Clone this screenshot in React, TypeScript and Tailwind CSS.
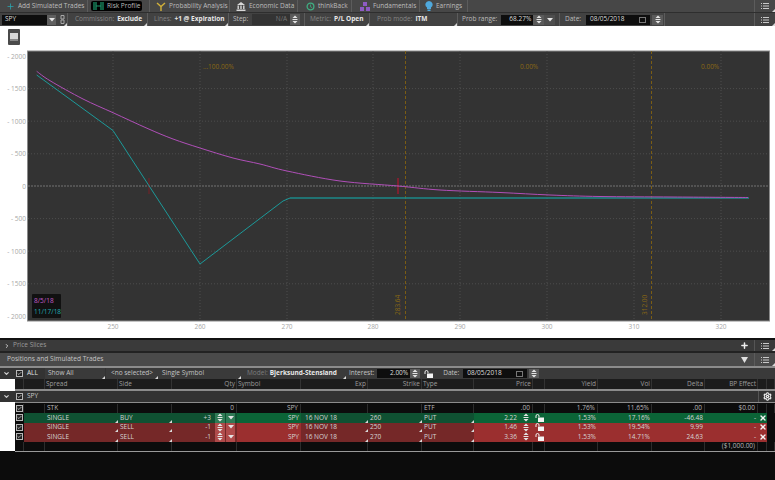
import { Check, ChevronDown, ChevronRight, Plus, Settings, X } from "lucide-react";
import type { ReactNode } from "react";

const Corner = () => (
  <span className="absolute bottom-0 right-0 w-0 h-0 border-l-[3px] border-b-[3px] border-l-transparent border-b-[#d8d8d8]" />
);

const ListIcon = () => (
  <svg width="8" height="8" viewBox="0 0 8 8">
    <path d="M0 1h1v1H0zM0 3.5h1v1H0zM0 6h1v1H0zM2 1h6v1H2zM2 3.5h6v1H2zM2 6h6v1H2z" fill="#c8c8c8" />
  </svg>
);

const Spinner = ({ className = "w-[10px] bg-[#5a5a5a]" }: { className?: string }) => (
  <span className={`flex flex-col h-full items-center justify-center shrink-0 ${className}`}>
    <svg width="6" height="9" viewBox="0 0 6 9">
      <path d="M3 0.5 5.5 3H.5zM0.5 4h5v1h-5zM.5 6h5L3 8.5z" fill="#e4e4e4" />
    </svg>
  </span>
);

const Arrow = ({ className = "w-[10px] bg-[#5a5a5a]" }: { className?: string }) => (
  <span className={`flex h-full items-center justify-center shrink-0 ${className}`}>
    <svg width="6" height="4" viewBox="0 0 6 4">
      <path d="M0 0h6L3 3.5z" fill="#e4e4e4" />
    </svg>
  </span>
);

const Lock = ({ className = "" }: { className?: string }) => (
  <svg width="9" height="8" viewBox="0 0 9 8" className={className}>
    <path d="M1 4V2a1.5 1.5 0 0 1 3 0v1" stroke="#f0f0f0" strokeWidth="1" fill="none" />
    <rect x="3" y="3.5" width="6" height="4.5" fill="#f4f4f4" />
  </svg>
);

const Tab = ({ w, icon, label, active }: { w: string; icon: ReactNode; label: string; active?: boolean }) => (
  <div className={`flex items-center h-full shrink-0 border-r border-[#5c5c5c] ${w}`}>
    <div className={`flex items-center gap-[3px] h-[10px] rounded-[2px] ${active ? "bg-black px-[2px] ml-[3px]" : "ml-[6px]"}`}>
      {icon}
      <span className="text-[#bdbdbd] whitespace-nowrap">{label}</span>
    </div>
  </div>
);

const Seg = ({ w, children, corner }: { w: string; children: ReactNode; corner?: boolean }) => (
  <div className={`relative flex items-center h-full shrink-0 border-r border-[#5c5c5c] ${w}`}>
    {children}
    {corner && <Corner />}
  </div>
);

const Field = ({ dim, value, pad = "pl-[7px]" }: { dim: string; value: string; pad?: string }) => (
  <div className={`flex items-center gap-[3px] whitespace-nowrap ${pad}`}>
    <span className="text-[#858585]">{dim}</span>
    <span className="text-[#e8e8e8] font-bold">{value}</span>
  </div>
);

const Checkbox = () => (
  <span className="flex items-center justify-center w-[7px] h-[7px] bg-[#222] border border-[#b8b8b8]">
    <Check size={7} strokeWidth={3} color="#f0f0f0" />
  </span>
);

const cols = "grid grid-cols-[9px_21px_73px_54px_65px_64px_67px_54px_52px_59px_12px_53px_54px_53px_53px_9px_8px]";

const xTicks = [
  [113, "250"],
  [200, "260"],
  [287, "270"],
  [373, "280"],
  [460, "290"],
  [547, "300"],
  [634, "310"],
  [721, "320"],
] as const;

// y is relative to the chart svg, 32.6px per 500
const yTicks = [
  [6, "- 2000"],
  [38.6, "- 1500"],
  [71.2, "- 1000"],
  [103.8, "- 500"],
  [136, "0"],
  [168.6, "- 500"],
  [201.2, "- 1000"],
  [233.8, "- 1500"],
  [266.5, "- 2000"],
] as const;

const purple: [number, number][] = [
  [36.7, 21.3], [50, 30.7], [83, 49], [113, 62.7], [148, 78.7], [173, 89], [200, 98], [233, 108],
  [260, 114], [287, 121], [340, 131], [398, 136], [440, 140], [500, 142.5], [550, 145], [600, 146.5],
  [673, 147], [748, 147.5],
];

// catmull-rom through the sampled points
const smooth = (p: [number, number][]) => {
  let d = `M${p[0][0]} ${p[0][1]}`;
  for (let i = 0; i < p.length - 1; i++) {
    const a = p[Math.max(i - 1, 0)];
    const b = p[i];
    const c = p[i + 1];
    const e = p[Math.min(i + 2, p.length - 1)];
    d += `C${b[0] + (c[0] - a[0]) / 6} ${b[1] + (c[1] - a[1]) / 6} ${c[0] - (e[0] - b[0]) / 6} ${c[1] - (e[1] - b[1]) / 6} ${c[0]} ${c[1]}`;
  }
  return d;
};

const Chart = () => (
  <svg width="775" height="295" viewBox="0 0 775 295" className="block" style={{ fontFamily: "Open Sans, sans-serif" }}>
    <rect x="27.5" y="1" width="742" height="270" fill="#333333" stroke="#8a8a8a" strokeWidth="1" />
    {yTicks.map(([y, t], i) => (
      <g key={i}>
        {i > 0 && i < 8 && i !== 4 && (
          <line x1="28" x2="769" y1={y} y2={y} stroke="#4e4e4e" strokeDasharray="1 2" />
        )}
        <text x="26" y={y + 2.5} textAnchor="end" fontSize="6.5" fill="#a8a8a8">
          {t}
        </text>
      </g>
    ))}
    <line x1="28" x2="769" y1="136" y2="136" stroke="#757575" strokeDasharray="2 1" />
    {xTicks.map(([x, t]) => (
      <g key={x}>
        <line x1={x} x2={x} y1="1" y2="271" stroke="#4e4e4e" strokeDasharray="1 2" />
        <text x={x} y="279" textAnchor="middle" fontSize="6.5" fill="#a8a8a8">
          {t}
        </text>
      </g>
    ))}
    <text x="203" y="18.5" fontSize="6.5" fill="#8a6814">...100.00%</text>
    <text x="520" y="18.5" fontSize="6.5" fill="#8a6814">0.00%</text>
    <text x="701" y="18.5" fontSize="6.5" fill="#8a6814">0.00%</text>
    <line x1="405.5" x2="405.5" y1="1" y2="271" stroke="#7a5c14" strokeDasharray="3 2" />
    <line x1="651.5" x2="651.5" y1="1" y2="271" stroke="#7a5c14" strokeDasharray="3 2" />
    <text transform="translate(400 265) rotate(-90)" fontSize="6.5" fill="#8a6814">283.64</text>
    <text transform="translate(647 265) rotate(-90)" fontSize="6.5" fill="#8a6814">312.00</text>
    <line x1="149" x2="149" y1="128" y2="144" stroke="#7a2026" strokeWidth="1" />
    <line x1="398" x2="398" y1="128" y2="144" stroke="#c8102e" strokeWidth="1" />
    <polyline points="36.7,25 113,80.5 200,214 283,151 290,148" fill="none" stroke="#1c9a9a" strokeWidth="1" />
    <line x1="290" x2="749" y1="148" y2="148" stroke="#1c8a8a" strokeWidth="1.6" />
    <path d={smooth(purple)} fill="none" stroke="#b04fb8" strokeWidth="1" />
    <rect x="32" y="244" width="29" height="24" rx="1" fill="#111111" />
    <text x="34" y="253" fontSize="6.5" fill="#c05cc8">8/5/18</text>
    <text x="34" y="264" fontSize="6.5" fill="#22b0b0">11/17/18</text>
  </svg>
);

type Leg = {
  side: string;
  qty: string;
  exp: string;
  strike: string;
  price: string;
  vol: string;
  delta: string;
  green: boolean;
};

const legs: Leg[] = [
  { side: "BUY", qty: "+3", exp: "16 NOV 18", strike: "260", price: "2.22", vol: "17.16%", delta: "-46.48", green: true },
  { side: "SELL", qty: "-1", exp: "16 NOV 18", strike: "250", price: "1.46", vol: "19.54%", delta: "9.99", green: false },
  { side: "SELL", qty: "-1", exp: "16 NOV 18", strike: "270", price: "3.36", vol: "14.71%", delta: "24.63", green: false },
];

const LegRow = ({ leg }: { leg: Leg }) => {
  const edit = leg.green ? "bg-[#0f5132]" : "bg-[#752828]";
  const flat = leg.green ? "bg-[#0b6437]" : "bg-[#9b2f2f]";
  const btn = leg.green ? "bg-[#2f7a55]" : "bg-[#b04a4a]";
  const cell = "relative flex items-center h-full px-[2px] overflow-hidden";
  return (
    <div className={`${cols} h-[9.5px] text-[#d4d4d4] ${flat}`}>
      <div className="flex items-center justify-center bg-[#0c0c0c]">
        <Checkbox />
      </div>
      <div className={`${cell} ${edit}`} />
      <div className={`${cell} ${edit}`}>
        SINGLE
        <Corner />
      </div>
      <div className={`${cell} ${edit}`}>
        {leg.side}
        <Corner />
      </div>
      <div className={`${cell} ${edit} justify-end !pr-0`}>
        <span className="mr-[4px]">{leg.qty}</span>
        <Spinner className={`w-[10px] ${btn}`} />
        <span className="w-px" />
        <Arrow className={`w-[9px] ${btn}`} />
        <span className="w-[2px]" />
      </div>
      <div className={`${cell} justify-end`}>SPY</div>
      <div className={`${cell} ${edit}`}>
        <span className="pl-[2px]">{leg.exp}</span>
        <Corner />
      </div>
      <div className={`${cell} ${edit}`}>
        {leg.strike}
        <Corner />
      </div>
      <div className={`${cell} ${edit}`}>
        PUT
        <Corner />
      </div>
      <div className={`${cell} justify-end !pr-0`}>
        <span className="mr-[5px]">{leg.price}</span>
        <Spinner className="w-[8px]" />
        <span className="w-[3px]" />
      </div>
      <div className="flex items-center justify-center">
        <Lock />
      </div>
      <div className={`${cell} justify-end`}>1.53%</div>
      <div className={`${cell} justify-end`}>{leg.vol}</div>
      <div className={`${cell} justify-end`}>{leg.delta}</div>
      <div className={`${cell} justify-end`}>-</div>
      <div className="flex items-center justify-center">
        <X size={8} color="#f4f4f4" strokeWidth={4} />
      </div>
      <div className="bg-[#0c0c0c]" />
    </div>
  );
};

export default function App() {
  return (
    <div
      className="w-[775px] h-[480px] overflow-hidden bg-[#0c0c0c] text-[6.5px] leading-none"
      style={{ fontFamily: "'Open Sans', sans-serif" }}
    >
      {/* top tabs */}
      <div className="flex items-center h-[13px] bg-[#474747] border-b border-[#2e2e2e]">
        <Tab w="w-[88px]" label="Add Simulated Trades" icon={<Plus size={9} color="#2aa6b0" />} />
        <Tab
          w="w-[62px]"
          active
          label="Risk Profile"
          icon={
            <svg width="11" height="8" viewBox="0 0 11 8">
              <path d="M1 0v8M3 0v8M8 0v8M10 0v8M3 4h5" stroke="#1c9a6c" strokeWidth="1.2" fill="none" />
            </svg>
          }
        />
        <Tab
          w="w-[80px]"
          label="Probability Analysis"
          icon={
            <svg width="10" height="9" viewBox="0 0 10 9">
              <path d="M1 1 5 4.5 9 1M5 4.5V9" stroke="#d2b13a" strokeWidth="1.4" fill="none" />
            </svg>
          }
        />
        <Tab
          w="w-[68px]"
          label="Economic Data"
          icon={
            <svg width="10" height="9" viewBox="0 0 10 9">
              <path d="M5 0 9 3H1zM1.5 3.5h1.4V7H1.5zM4.3 3.5h1.4V7H4.3zM7.1 3.5h1.4V7H7.1zM.5 7.5h9V9h-9z" fill="#d8d8d8" />
            </svg>
          }
        />
        <Tab
          w="w-[54px]"
          label="thinkBack"
          icon={
            <svg width="9" height="9" viewBox="0 0 9 9" className="ml-[2px]">
              <circle cx="4.5" cy="4.5" r="3.4" stroke="#3fae82" strokeWidth="1.3" fill="none" />
              <path d="M4.5 2.5v2.3l1.6.8" stroke="#3fae82" strokeWidth=".8" fill="none" />
            </svg>
          }
        />
        <Tab
          w="w-[68px]"
          label="Fundamentals"
          icon={
            <svg width="10" height="9" viewBox="0 0 10 9" className="ml-[2px]">
              <path d="M3 0h4v4H3zM0 5h4v4H0zM6 5h4v4H6z" fill="#8e5bc4" />
            </svg>
          }
        />
        <Tab
          w="w-[48px]"
          label="Earnings"
          icon={
            <svg width="8" height="10" viewBox="0 0 8 10" className="-ml-[1px]">
              <path d="M4 0a3.6 3.6 0 0 1 2 6.6V8H2V6.6A3.6 3.6 0 0 1 4 0zM2.5 8.6h3V10h-3z" fill="#4fa8dc" />
            </svg>
          }
        />
        <div className="flex-1 h-full border-r border-[#5c5c5c]" />
        <div className="relative flex items-center justify-center w-[20px] h-full">
          <ListIcon />
          <Corner />
        </div>
      </div>

      {/* settings strip */}
      <div className="flex items-center h-[13px] bg-[#424242]">
        <Seg w="w-[68px]" corner>
          <div className="flex items-center h-[10px] ml-[2px]">
            <div className="flex items-center w-[45px] h-full bg-[#0e0e0e] pl-[3px] text-[#dcdcdc]">SPY</div>
            <Arrow className="w-[9px] bg-[#5f5f5f]" />
          </div>
          <svg width="5" height="9" viewBox="0 0 5 9" className="ml-[4px]">
            <path d="M1 .5h3v3.5H1zM1 5h3v3.5H1z" stroke="#a8a8a8" fill="none" />
          </svg>
        </Seg>
        <Seg w="w-[80px]" corner>
          <Field dim="Commission:" value="Exclude" />
        </Seg>
        <Seg w="w-[81px]" corner>
          <Field dim="Lines:" value="+1 @ Expiration" pad="pl-[6px]" />
        </Seg>
        <Seg w="w-[76px]">
          <span className="ml-[4px] text-[#bdbdbd]">Step:</span>
          <div className="flex items-center h-[11px] ml-[4px]">
            <div className="flex items-center justify-end w-[38px] h-full bg-[#333] pr-[3px] text-[#777]">N/A</div>
            <Spinner className="w-[10px] bg-[#5a5a5a]" />
          </div>
        </Seg>
        <Seg w="w-[65px]" corner>
          <Field dim="Metric:" value="P/L Open" pad="pl-[5px]" />
        </Seg>
        <Seg w="w-[88px]" corner>
          <Field dim="Prob mode:" value="ITM" />
        </Seg>
        <Seg w="w-[102px]">
          <span className="ml-[4px] text-[#bdbdbd] whitespace-nowrap">Prob range:</span>
          <div className="flex items-center h-[10px] ml-[4px]">
            <div className="flex items-center justify-end w-[32px] h-full bg-[#0e0e0e] pr-[2px] text-[#dcdcdc]">68.27%</div>
            <Spinner className="w-[11px] bg-[#5a5a5a]" />
            <Arrow className="w-[11px] bg-[#4e4e4e]" />
          </div>
        </Seg>
        <Seg w="w-[105px]">
          <span className="ml-[5px] text-[#bdbdbd]">Date:</span>
          <div className="flex items-center h-[10px] ml-[5px]">
            <div className="flex items-center justify-between w-[64px] h-full bg-[#0e0e0e] px-[4px] text-[#dcdcdc]">
              08/05/2018
              <span className="w-[7px] h-[6px] border border-[#777]" />
            </div>
            <span className="w-[2px]" />
            <Spinner className="w-[11px] bg-[#5a5a5a]" />
          </div>
        </Seg>
        <div className="flex-1 h-full border-r border-[#5c5c5c]" />
        <div className="relative flex items-center justify-center w-[20px] h-full">
          <ListIcon />
          <Corner />
        </div>
      </div>

      {/* chart pane */}
      <div className="h-[312px] bg-white">
        <div className="h-[24px] pl-[8px] pt-[3px]">
          <div className="flex items-center justify-center w-[12px] h-[16px] rounded-[1px] bg-[#4a4a4a]">
            <div className="w-[8px] h-[8px] bg-[#d8d8d8] border-b-2 border-[#888]" />
          </div>
        </div>
        <Chart />
      </div>

      <div className="h-[2px] bg-[#111]" />

      {/* price slices */}
      <div className="flex items-center h-[11px] bg-[#3a3a3a] text-[#9a9a9a]">
        <ChevronRight size={6} color="#c8c8c8" strokeWidth={4} className="ml-[4px] mr-[3px]" />
        <span className="flex-1">Price Slices</span>
        <div className="flex items-center justify-center w-[20px] h-full border-r border-[#555]">
          <Plus size={9} color="#f0f0f0" strokeWidth={4} />
        </div>
        <div className="relative flex items-center justify-center w-[20px] h-full">
          <ListIcon />
          <Corner />
        </div>
      </div>
      <div className="h-[2px] bg-[#222]" />

      {/* positions header */}
      <div className="flex items-center h-[13px] bg-[#4a4a4a] text-[#c4c4c4] text-[6.6px]">
        <span className="flex-1 pl-[7px]">Positions and Simulated Trades</span>
        <div className="flex items-center justify-center w-[20px] h-full border-r border-[#5c5c5c]">
          <svg width="7" height="6" viewBox="0 0 7 6">
            <path d="M0 0h7L3.5 6z" fill="#e0e0e0" />
          </svg>
        </div>
        <div className="relative flex items-center justify-center w-[20px] h-full">
          <ListIcon />
          <Corner />
        </div>
      </div>
      <div className="h-[2px] bg-[#8c8c8c]" />

      {/* filters */}
      <div className="flex items-center h-[11px] bg-[#333] text-[#c4c4c4]">
        <div className="flex items-center w-[45px] shrink-0 h-full">
          <ChevronDown size={7} color="#d0d0d0" strokeWidth={4} className="ml-[3px]" />
          <span className="w-[6px]" />
          <Checkbox />
          <span className="ml-[4px] text-[#e0e0e0]">ALL</span>
        </div>
        <div className="relative flex items-center w-[60px] h-full pl-[3px] bg-[#3a3a3a]">
          Show All
          <Corner />
        </div>
        <div className="relative flex items-center w-[52px] h-full justify-center ml-[1px] bg-[#3a3a3a]">
          {"<no selected>"}
          <Corner />
        </div>
        <div className="relative flex items-center w-[83px] h-full pl-[4px] bg-[#3a3a3a]">
          Single Symbol
          <Corner />
        </div>
        <div className="relative flex items-center w-[105px] h-full pl-[6px] gap-[2px] whitespace-nowrap bg-[#3a3a3a]">
          <span className="text-[#7c7c7c]">Model:</span>
          <span className="text-[#e8e8e8] font-bold">Bjerksund-Stensland</span>
          <Corner />
        </div>
        <div className="flex items-center h-full pl-[3px] flex-1 bg-[#3a3a3a]">
          <span>Interest:</span>
          <div className="flex items-center justify-end w-[33px] h-[9px] ml-[3px] bg-[#0e0e0e] pr-[2px] text-[#dcdcdc]">2.00%</div>
          <Spinner className="w-[10px] bg-[#5a5a5a] !h-[9px]" />
          <Lock className="ml-[4px]" />
          <span className="ml-[10px]">Date:</span>
          <div className="flex items-center justify-between w-[64px] h-[9px] ml-[4px] bg-[#0e0e0e] px-[4px] text-[#dcdcdc]">
            08/05/2018
            <span className="w-[7px] h-[6px] border border-[#777]" />
          </div>
          <span className="w-[2px]" />
          <Spinner className="w-[10px] bg-[#5a5a5a] !h-[9px]" />
          <div className="flex-1" />
        </div>
      </div>

      {/* table */}
      <div className="flex">
        <div className="w-[15px] h-[72px] shrink-0 bg-white" />
        <div className="flex-1">
          <div className={`${cols} h-[10px] bg-[#1c1c1c] text-[#9c9c9c] [&>div]:border-r [&>div]:border-[#333] [&>div]:flex [&>div]:items-center [&>div]:px-[1px]`}>
            <div />
            <div />
            <div>Spread</div>
            <div>Side</div>
            <div className="justify-end">Qty</div>
            <div>Symbol</div>
            <div className="justify-end">Exp</div>
            <div className="justify-end">Strike</div>
            <div>Type</div>
            <div className="justify-end">Price</div>
            <div />
            <div className="justify-end">Yield</div>
            <div className="justify-end">Vol</div>
            <div className="justify-end">Delta</div>
            <div className="justify-end">BP Effect</div>
            <div />
            <div />
          </div>
          <div className="h-[2px] bg-[#8c8c8c]" />
          <div className="flex items-center h-[11px] -ml-[15px] bg-[#333] text-[#c8c8c8] relative">
            <ChevronDown size={7} color="#d0d0d0" strokeWidth={4} className="ml-[3px]" />
            <span className="w-[6px]" />
            <Checkbox />
            <span className="ml-[4px] flex-1">SPY</span>
            <div className="flex items-center justify-center w-[17px] h-full border-l border-[#555]">
              <Settings size={9} color="#f0f0f0" strokeWidth={3} />
            </div>
          </div>
          <div className="h-[1px] bg-[#8c8c8c]" />
          <div className="bg-[#0c0c0c]">
            <div className="h-[1px]" />
            <div className={`${cols} h-[9px] text-[#b8b8b8] [&>div]:border-r [&>div]:border-[#2c2c2c] [&>div]:flex [&>div]:items-center [&>div]:px-[2px]`}>
              <div className="justify-center !px-0">
                <Checkbox />
              </div>
              <div />
              <div>STK</div>
              <div />
              <div className="justify-end">0</div>
              <div className="justify-end">SPY</div>
              <div />
              <div />
              <div>ETF</div>
              <div className="justify-end">.00</div>
              <div />
              <div className="justify-end">1.76%</div>
              <div className="justify-end">11.65%</div>
              <div className="justify-end">.00</div>
              <div className="justify-end">$0.00</div>
              <div />
              <div />
            </div>
            {legs.map((leg) => (
              <LegRow key={leg.strike} leg={leg} />
            ))}
            <div className={`${cols} h-[9px] text-[#b8b8b8] [&>div]:border-r [&>div]:border-[#2c2c2c] [&>div]:flex [&>div]:items-center`}>
              <div />
              <div />
              <div />
              <div />
              <div />
              <div />
              <div />
              <div />
              <div />
              <div />
              <div />
              <div />
              <div />
              <div />
              <div className="justify-end pr-[2px]">($1,000.00)</div>
              <div />
              <div />
            </div>
          </div>
        </div>
      </div>
      <div className="h-[1px] ml-[15px] bg-[#9a9a9a]" />
    </div>
  );
}
